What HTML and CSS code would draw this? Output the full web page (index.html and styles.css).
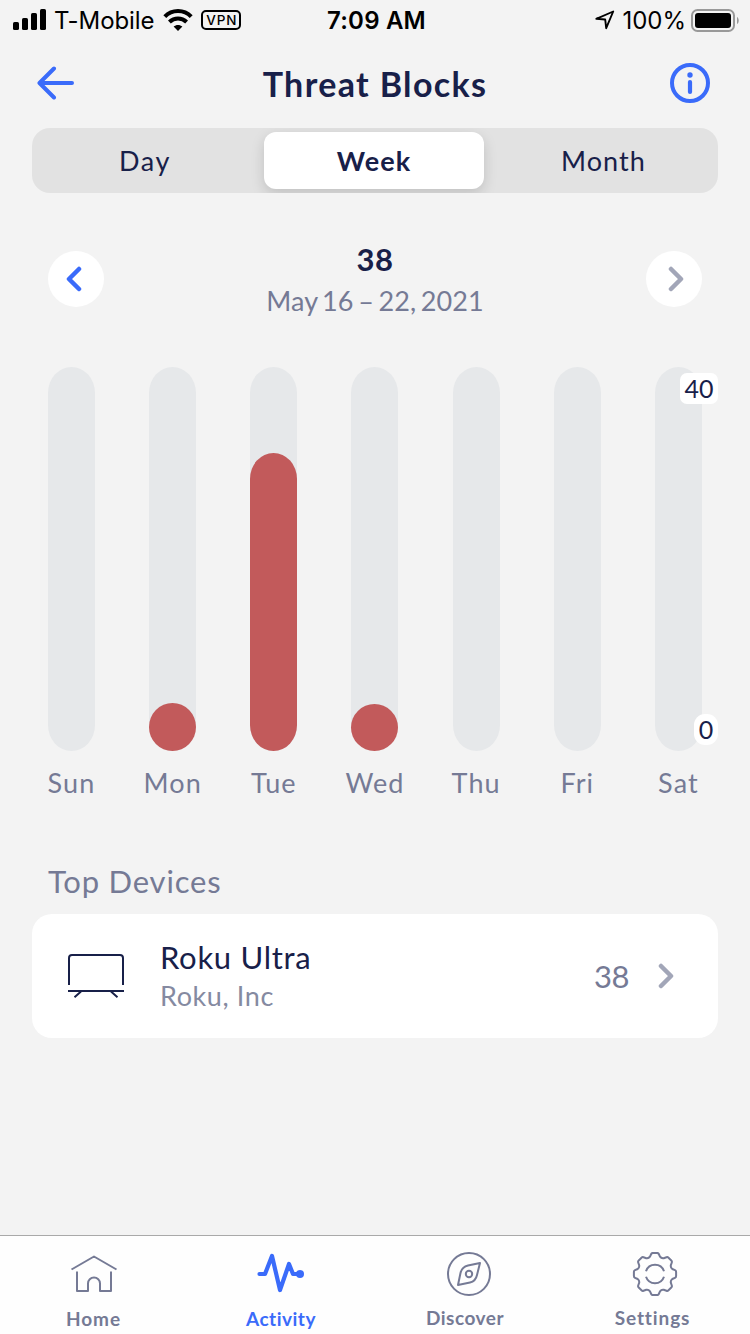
FILE: index.html
```html
<!DOCTYPE html>
<html lang="en">
<head>
<meta charset="utf-8">
<title>Threat Blocks</title>
<link rel="stylesheet" href="styles.css">
</head>
<body>
<div class="screen">
  <div class="status">
    <div class="status-left">
      <svg class="signal" width="33" height="22" viewBox="0 0 33 22"><rect x="0" y="13" width="6" height="8" rx="1.6"/><rect x="9" y="9" width="6" height="12" rx="1.6"/><rect x="18" y="4" width="6" height="17" rx="1.6"/><rect x="27" y="0" width="6" height="21" rx="1.6"/></svg>
      <span class="carrier">T-Mobile</span>
      <svg class="wifi" width="30" height="22" viewBox="0 0 30 22"><g fill="none" stroke="#000" stroke-width="4"><path d="M1.8 7.700C9 .1 21 .1 28.200 7.700"/><path d="M6.400 13C11.300 8.200 18.700 8.200 23.600 13"/></g><path d="M15 22l-4.400-4.400c2.500-2.200 6.300-2.200 8.800 0z"/></svg>
      <span class="vpn">VPN</span>
    </div>
    <span class="clock">7:09 AM</span>
    <div class="status-right">
      <svg class="location" width="20" height="20" viewBox="0 0 20 20"><path d="M1.300 8.800L18.200 1.500 11.200 18.200 10.200 9.500z" fill="none" stroke="#000" stroke-width="1.900" stroke-linejoin="round"/></svg>
      <span class="percent">100%</span>
      <svg class="battery" width="48" height="23" viewBox="0 0 48 23"><rect x="1" y="1" width="42" height="21" rx="5.500" fill="none" stroke="#999" stroke-width="2"/><rect x="4" y="4" width="36" height="15" rx="3"/><path d="M46 8c2.300 1 2.300 6 0 7z" fill="#999"/></svg>
    </div>
  </div>

  <header class="header">
    <svg class="back" width="38" height="34" viewBox="0 0 38 34"><path d="M17 2.500L2.500 17 17 31.500M3 17H35" /></svg>
    <h1 class="title">Threat Blocks</h1>
    <svg class="info" width="40" height="40" viewBox="0 0 40 40"><circle cx="20" cy="20" r="18" fill="none" stroke="#3a6bfa" stroke-width="4"/><circle cx="20" cy="12" r="2.700"/><rect x="17.900" y="17" width="4.200" height="14" rx="2.100"/></svg>
  </header>

  <nav class="segments">
    <span class="segment day">Day</span>
    <span class="segment selected">Week</span>
    <span class="segment month">Month</span>
  </nav>

  <section class="period">
    <button class="round"><svg width="16" height="26" viewBox="0 0 16 26"><path d="M13 3L3 13 13 23" stroke="#3a6bfa"/></svg></button>
    <div class="summary">
      <div class="total">38</div>
      <div class="range">May 16 – 22, 2021</div>
    </div>
    <button class="round next"><svg width="16" height="26" viewBox="0 0 16 26"><path d="M3 3L13 13 3 23" stroke="#a2a6b8"/></svg></button>
  </section>

  <section class="chart">
    <div class="column"><div class="track"></div><span class="weekday sun">Sun</span></div>
    <div class="column"><div class="track"><div class="bar small" style="height:48px"></div></div><span class="weekday mon">Mon</span></div>
    <div class="column"><div class="track"><div class="bar" style="height:298px"></div></div><span class="weekday tue">Tue</span></div>
    <div class="column"><div class="track"><div class="bar small" style="height:47px"></div></div><span class="weekday wed">Wed</span></div>
    <div class="column"><div class="track"></div><span class="weekday thu">Thu</span></div>
    <div class="column"><div class="track"></div><span class="weekday fri">Fri</span></div>
    <div class="column"><div class="track"></div><span class="weekday sat">Sat</span></div>
    <span class="axis max">40</span>
    <span class="axis min">0</span>
  </section>

  <h2 class="section-title">Top Devices</h2>
  <article class="device">
    <svg class="tv" width="56" height="46" viewBox="0 0 56 46"><path d="M1 32V5Q1 2 4 2H52Q55 2 55 5V32M0 38H56M13 38.500L6.500 44.200M43 38.500L49.500 44.200"/></svg>
    <div class="device-text">
      <div class="device-name">Roku Ultra</div>
      <div class="device-maker">Roku, Inc</div>
    </div>
    <span class="device-count">38</span>
    <svg class="chevron" width="16" height="26" viewBox="0 0 16 26"><path d="M3 3L13 13 3 23" stroke="#a2a6b8"/></svg>
  </article>

  <nav class="tabs">
    <div class="tab home">
      <svg width="48" height="44" viewBox="0 0 48 44"><path d="M1.500 17.500L24 4.500 46.500 17.500M7 19.500V39H18V31.500a6 6 0 0 1 12 0V39H41V19.500"/></svg>
      <span>Home</span>
    </div>
    <div class="tab activity">
      <svg width="48" height="44" viewBox="0 0 48 44"><path d="M2.500 22H8L15 4 23 38 32 12 36 22H43" stroke-width="4.200" stroke-linecap="round"/><circle cx="43" cy="22" r="4" class="dot"/></svg>
      <span>Activity</span>
    </div>
    <div class="tab discover">
      <svg width="48" height="44" viewBox="0 0 48 44"><circle cx="24" cy="22" r="21"/><path d="M13 33L15.500 21C16.500 16.500 19 14.500 23 13.500L35 11 32 23C31 27.500 29 29.700 25 30.500Z"/><circle cx="24" cy="22" r="3.200"/></svg>
      <span>Discover</span>
    </div>
    <div class="tab settings">
      <svg width="48" height="44" viewBox="0 0 48 44"><path transform="translate(24 22)" d="M-5-17.300L-3.800-20Q-3.300-21.100-2-21.100H2Q3.300-21.100 3.800-20L5-17.300Q6.400-15.400 8.700-15.800L11.500-16.800Q12.600-17.200 13.500-16.300L16.300-13.500Q17.200-12.600 16.800-11.500L15.800-8.700Q15.400-6.400 17.300-5L20-3.800Q21.100-3.300 21.100-2V2Q21.100 3.300 20 3.800L17.300 5Q15.400 6.400 15.800 8.700L16.800 11.500Q17.200 12.600 16.300 13.500L13.500 16.300Q12.600 17.200 11.500 16.800L8.700 15.800Q6.400 15.400 5 17.300L3.800 20Q3.300 21.100 2 21.100H-2Q-3.300 21.100-3.800 20L-5 17.300Q-6.400 15.400-8.700 15.800L-11.500 16.800Q-12.600 17.200-13.500 16.300L-16.300 13.500Q-17.200 12.600-16.800 11.500L-15.800 8.700Q-15.400 6.400-17.300 5L-20 3.800Q-21.100 3.300-21.100 2V-2Q-21.100-3.300-20-3.800L-17.300-5Q-15.400-6.400-15.800-8.700L-16.800-11.500Q-17.200-12.600-16.300-13.500L-13.500-16.300Q-12.600-17.200-11.500-16.800L-8.700-15.800Q-6.400-15.400-5-17.300Z"/><path d="M15 19.200A9.500 9.500 0 0 1 33 19.200M15 24.800A9.500 9.500 0 0 0 33 24.800"/></svg>
      <span>Settings</span>
    </div>
  </nav>
</div>
</body>
</html>
```

FILE: styles.css
```css
* { box-sizing: border-box; }
body { margin: 0; font-family: Lato, "Open Sans", sans-serif; color: #182049; }
h1, h2 { margin: 0; font-weight: 400; }
.screen { width: 750px; height: 1334px; background: #f3f3f3; display: flex; flex-direction: column; overflow: hidden; }

.status { height: 40px; display: grid; grid-template-columns: 1fr auto 1fr; align-items: center; padding: 0 11px 0 13px; font-family: Inter, sans-serif; font-size: 24px; color: #000; }
.status-left, .status-right { display: flex; align-items: center; }
.status-right { justify-content: flex-end; }
.signal { margin-right: 8px; }
.carrier { letter-spacing: -0.1px; margin-right: 9px; padding-top: 1px; }
.wifi { margin-right: 8px; }
.vpn { width: 40px; height: 20px; border: 2px solid #000; border-radius: 5px; font-size: 13.5px; font-weight: 500; letter-spacing: 1px; line-height: 16px; text-align: center; padding-left: 1px; }
.clock { font-weight: 600; letter-spacing: 0.2px; padding: 1px 0 0 1px; }
.location { margin-right: 7px; }
.percent { margin-right: 5px; padding-top: 1px; }

.header { height: 88px; display: flex; align-items: center; justify-content: space-between; padding: 0 40px 2px 37px; }
.back { fill: none; stroke: #3a6bfa; stroke-width: 4; stroke-linecap: round; stroke-linejoin: round; }
.info { fill: #3a6bfa; }
.title { font-size: 34px; font-weight: 700; letter-spacing: 1.35px; line-height: 40px; padding: 2px 0 0 5px; }

.segments { height: 65px; margin: 0 32px; padding: 4px 0; border-radius: 18px; background: #e2e2e2; display: grid; grid-template-columns: 232px 220px 1fr; overflow: hidden; flex: none; }
.segment { height: 57px; display: flex; align-items: center; justify-content: center; font-size: 27px; letter-spacing: 1.1px; }
.day { padding-right: 6px; letter-spacing: 1.6px; }
.month { padding-left: 5px; }
.selected { background: #fff; border-radius: 12px; font-weight: 700; box-shadow: 0 5px 14px rgba(0,0,0,.15); }

.period { height: 174px; padding: 47px 48px 0; display: flex; justify-content: space-between; align-items: flex-start; }
.round { width: 56px; height: 56px; margin: 11px 0 0; padding: 0 4px 0 0; border: 0; border-radius: 50%; background: #fff; display: flex; align-items: center; justify-content: center; }
.round.next { padding: 0 0 0 4px; }
.round svg, .chevron { fill: none; stroke-width: 4.500; stroke-linecap: round; stroke-linejoin: round; }
.summary { text-align: center; }
.total { font-size: 31px; line-height: 38px; font-weight: 700; letter-spacing: 0.5px; }
.range { font-size: 27px; line-height: 40px; margin-top: 3px; color: #757a95; letter-spacing: 0.1px; word-spacing: -2.500px; }

.chart { position: relative; height: 434px; padding: 0 48px; display: flex; justify-content: space-between; }
.column { width: 47px; display: flex; flex-direction: column; align-items: center; }
.track { width: 47px; height: 384px; border-radius: 23.5px / 26px; background: #e6e8ea; display: flex; align-items: flex-end; flex: none; }
.bar { width: 47px; border-radius: 23.5px / 26px; background: #c25a5b; }
.bar.small { border-radius: 50%; }
.weekday { font-size: 27px; line-height: 40px; margin-top: 12px; letter-spacing: 1.1px; color: #757a95; white-space: nowrap; }
.axis { position: absolute; right: 32px; height: 31px; background: #fff; font-size: 25px; line-height: 31px; text-align: center; }
.max { top: 6px; width: 38px; border-radius: 7px; }
.min { top: 347px; width: 24px; border-radius: 11px; }

.section-title { font-size: 31px; line-height: 40px; letter-spacing: 0.8px; color: #757a95; padding-left: 48px; margin-top: 60px; }
.device { height: 124px; margin: 13px 32px 0; padding: 0 44px 0 36px; background: #fff; border-radius: 20px; display: flex; align-items: center; flex: none; }
.tv { fill: none; stroke: #182049; stroke-width: 2; }
.device-text { margin-left: 36px; flex: 1; }
.device-name { font-size: 31px; line-height: 40px; letter-spacing: 0.7px; }
.device-maker { font-size: 27px; line-height: 38px; letter-spacing: 0.6px; color: #858aa1; }
.device-count { font-size: 31px; line-height: 40px; letter-spacing: -0.5px; color: #757a95; margin-right: 29px; }

.tabs { margin-top: auto; height: 99px; border-top: 1px solid #a9a9a9; background: #fefefe; display: grid; grid-template-columns: 187px 188px 180px 1fr; padding-top: 16px; }
.tab { display: flex; flex-direction: column; align-items: center; color: #757a95; font-size: 19px; font-weight: 700; line-height: 24px; letter-spacing: 0.5px; }
.tab svg { fill: none; stroke: currentColor; stroke-width: 2; stroke-linejoin: round; margin-bottom: 11px; }
.home span { letter-spacing: 0.9px; }
.activity { color: #3a6bfa; }
.dot { fill: currentColor; stroke: none; }
.discover svg { margin-left: 8px; }
.settings svg { margin-left: 5px; }
.discover span, .settings span { margin-top: -1px; }
.settings span { letter-spacing: 0.9px; }
```
